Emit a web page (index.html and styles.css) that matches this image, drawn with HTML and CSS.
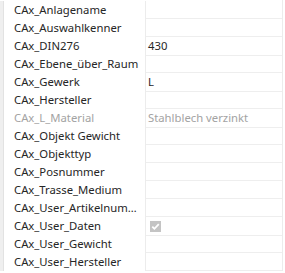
FILE: index.html
```html
<!DOCTYPE html>
<html>
<head>
<meta charset="utf-8">
<link rel="stylesheet" href="styles.css">
</head>
<body>
<div class="grid">
  <div class="row"><div class="gutter"></div><div class="name">CAx_Anlagename</div><div class="value"></div></div>
  <div class="row"><div class="gutter"></div><div class="name">CAx_Auswahlkenner</div><div class="value"></div></div>
  <div class="row"><div class="gutter"></div><div class="name">CAx_DIN276</div><div class="value">430</div></div>
  <div class="row"><div class="gutter"></div><div class="name">CAx_Ebene_über_Raum</div><div class="value"></div></div>
  <div class="row"><div class="gutter"></div><div class="name">CAx_Gewerk</div><div class="value">L</div></div>
  <div class="row"><div class="gutter"></div><div class="name">CAx_Hersteller</div><div class="value"></div></div>
  <div class="row disabled"><div class="gutter"></div><div class="name">CAx_L_Material</div><div class="value">Stahlblech verzinkt</div></div>
  <div class="row"><div class="gutter"></div><div class="name">CAx_Objekt Gewicht</div><div class="value"></div></div>
  <div class="row"><div class="gutter"></div><div class="name">CAx_Objekttyp</div><div class="value"></div></div>
  <div class="row"><div class="gutter"></div><div class="name">CAx_Posnummer</div><div class="value"></div></div>
  <div class="row"><div class="gutter"></div><div class="name">CAx_Trasse_Medium</div><div class="value"></div></div>
  <div class="row"><div class="gutter"></div><div class="name">CAx_User_Artikelnummer</div><div class="value"></div></div>
  <div class="row"><div class="gutter"></div><div class="name">CAx_User_Daten</div><div class="value"><span class="check"><svg width="11" height="11" viewBox="0 0 11 11"><path d="M2.3 5.6 L4.4 7.8 L8.8 3.2" fill="none" stroke="#fff" stroke-width="1.8"/></svg></span></div></div>
  <div class="row"><div class="gutter"></div><div class="name">CAx_User_Gewicht</div><div class="value"></div></div>
  <div class="row"><div class="gutter"></div><div class="name">CAx_User_Hersteller</div><div class="value"></div></div>
</div>
</body>
</html>
```
FILE: styles.css
```css
html, body {
  margin: 0;
  padding: 0;
  background: #fff;
}

body {
  font-family: "Noto Sans", "Open Sans", sans-serif;
  font-size: 11.3px;
  color: #262626;
}

.grid {
  display: flex;
  flex-direction: column;
  padding-top: 1px;
  width: 282px;
  border-right: 1px solid #ececec;
}

.row {
  display: grid;
  grid-template-columns: 4px 142px 1fr;
  height: 18px;
}

.gutter {
  background: #efefef;
  border-right: 1px solid #e2e2e2;
}

.name {
  padding-left: 10px;
  padding-right: 5px;
  line-height: 18px;
  white-space: nowrap;
  overflow: hidden;
  text-overflow: ellipsis;
  border-right: 1px solid #ececec;
}

.value {
  padding-left: 2px;
  line-height: 18px;
  white-space: nowrap;
  border-bottom: 1px solid #eeeeee;
  box-sizing: border-box;
}

.disabled .name,
.disabled .value {
  color: #a3a3a3;
}

.check {
  display: inline-block;
  width: 11px;
  height: 11px;
  margin-top: 4px;
  margin-left: 2px;
  background: #c4c4c4;
  vertical-align: top;
}

.check svg {
  display: block;
}
```
